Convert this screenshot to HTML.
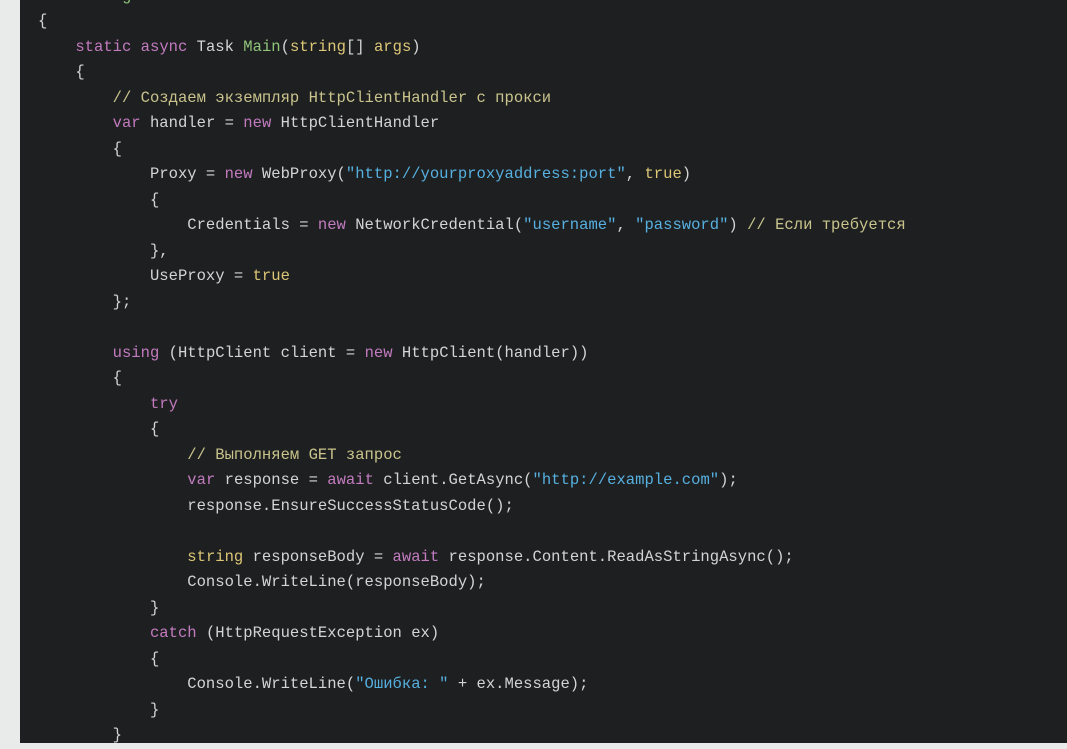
<!DOCTYPE html>
<html><head><meta charset="utf-8"><style>
html,body{margin:0;padding:0;width:1067px;height:743px;overflow:hidden;background:#e9eaea}
.code{position:absolute;left:20px;top:0;width:1047px;height:743px;background:#1e1f21}
pre{position:absolute;left:18px;top:-16.25px;margin:0;font-family:"Liberation Mono","DejaVu Sans Mono",monospace;font-size:15.55px;line-height:25.5px;color:#d4d4d4;white-space:pre}
.k{color:#c27bbf}.g{color:#8fc57a}.y{color:#dcc776}.c{color:#c9c48c}.s{color:#56b0e0}
</style></head><body><div class="code"><pre>         <span class="g">g</span>
{
    <span class="k">static</span> <span class="k">async</span> Task <span class="g">Main</span>(<span class="y">string</span>[] <span class="y">args</span>)
    {
        <span class="c">// Создаем экземпляр HttpClientHandler с прокси</span>
        <span class="k">var</span> handler = <span class="k">new</span> HttpClientHandler
        {
            Proxy = <span class="k">new</span> WebProxy(<span class="s">"http://yourproxyaddress:port"</span>, <span class="y">true</span>)
            {
                Credentials = <span class="k">new</span> NetworkCredential(<span class="s">"username"</span>, <span class="s">"password"</span>) <span class="c">// Если требуется</span>
            },
            UseProxy = <span class="y">true</span>
        };

        <span class="k">using</span> (HttpClient client = <span class="k">new</span> HttpClient(handler))
        {
            <span class="k">try</span>
            {
                <span class="c">// Выполняем GET запрос</span>
                <span class="k">var</span> response = <span class="k">await</span> client.GetAsync(<span class="s">"http://example.com"</span>);
                response.EnsureSuccessStatusCode();

                <span class="y">string</span> responseBody = <span class="k">await</span> response.Content.ReadAsStringAsync();
                Console.WriteLine(responseBody);
            }
            <span class="k">catch</span> (HttpRequestException ex)
            {
                Console.WriteLine(<span class="s">"Ошибка: "</span> + ex.Message);
            }
        }
</pre></div></body></html>
